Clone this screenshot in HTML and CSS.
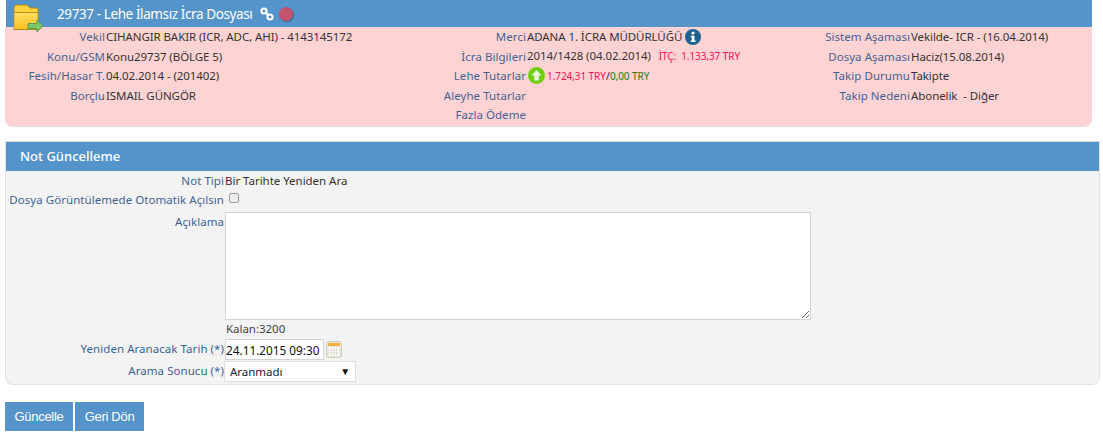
FILE: index.html
```html
<!DOCTYPE html>
<html lang="tr">
<head>
<meta charset="utf-8">
<title>Not Güncelleme</title>
<link rel="stylesheet" href="styles.css">
</head>
<body>
<section class="file">
  <header class="file-head">
    <svg class="folder" width="34" height="30" viewBox="0 0 34 30">
      <defs><linearGradient id="folderFill" x1="0" y1="0" x2="0" y2="1"><stop offset="0" stop-color="#ffdf60"/><stop offset="1" stop-color="#ffc21e"/></linearGradient></defs>
      <path d="M1 5 Q1 2 3 2 H13 Q15 2 16 4 L17 5 H24 Q25 5 25 7 V26.500 H1 Z" fill="#ffd23c" stroke="#a88a1e"/>
      <path d="M1.500 10 H24.500 V26 H1.500 Z" fill="url(#folderFill)"/>
      <path d="M1 9.500 H25" stroke="#b8941f"/>
      <path d="M15 20.500 H24 V17 L30 23 L24 29 V25.500 H15 Z" fill="#7fc66a" stroke="#5a9a4a"/>
    </svg>
    <h1 class="file-title">29737 - Lehe İlamsız İcra Dosyası</h1>
    <svg class="link-icon" width="14" height="14" viewBox="0 0 14 14" fill="none" stroke="#fff" stroke-width="2">
      <circle cx="4" cy="4" r="2.600"/><circle cx="10" cy="10" r="2.600"/><path d="M5.500 5.500 L8.500 8.500"/>
    </svg>
    <span class="status-dot"></span>
  </header>
  <div class="file-info">
    <span class="lab">Vekil</span><span class="val">CIHANGIR BAKIR (ICR, ADC, AHI) - 4143145172</span>
    <span class="lab">Merci</span><span class="val">ADANA 1. İCRA MÜDÜRLÜĞÜ
      <svg class="inline-icon" width="16" height="16" viewBox="0 0 16 16"><circle cx="8" cy="8" r="8" fill="#1f6291"/><circle cx="8" cy="4" r="1.600" fill="#fff"/><path d="M5.800 6.800 H9.500 V11.500 H10.500 V13 H5.800 V11.500 H6.800 V8.200 H5.800 Z" fill="#fff"/></svg></span>
    <span class="lab">Sistem Aşaması</span><span class="val">Vekilde- ICR - (16.04.2014)</span>

    <span class="lab">Konu/GSM</span><span class="val">Konu29737 (BÖLGE 5)</span>
    <span class="lab">İcra Bilgileri</span><span class="val">2014/1428 (04.02.2014) <small class="red itc">İTÇ:&nbsp; 1.133,37 TRY</small></span>
    <span class="lab">Dosya Aşaması</span><span class="val">Haciz(15.08.2014)</span>

    <span class="lab">Fesih/Hasar T.</span><span class="val">04.02.2014 - (201402)</span>
    <span class="lab">Lehe Tutarlar</span><span class="val"><svg class="inline-icon up" width="17" height="17" viewBox="0 0 17 17"><circle cx="8.500" cy="8.500" r="8.500" fill="#6fce0c"/><path d="M8.500 3 L13.500 8.500 H10.800 V13.500 H6.200 V8.500 H3.500 Z" fill="#e8f8e0"/></svg><small class="red">1.724,31 TRY</small><span class="slash">/</span><small class="green">0,00 TRY</small></span>
    <span class="lab">Takip Durumu</span><span class="val">Takipte</span>

    <span class="lab">Borçlu</span><span class="val">ISMAIL GÜNGÖR</span>
    <span class="lab">Aleyhe Tutarlar</span><span class="val"></span>
    <span class="lab">Takip Nedeni</span><span class="val">Abonelik&nbsp; - Diğer</span>

    <span class="lab"></span><span class="val"></span>
    <span class="lab">Fazla Ödeme</span><span class="val"></span>
    <span class="lab"></span><span class="val"></span>
  </div>
</section>

<section class="panel">
  <h2 class="panel-head">Not Güncelleme</h2>
  <form class="form">
    <label class="f-lab">Not Tipi</label>
    <div class="f-val">Bir Tarihte Yeniden Ara</div>

    <label class="f-lab check-lab">Dosya Görüntülemede Otomatik Açılsın</label>
    <div class="f-val check-val"><input class="check" type="checkbox"></div>

    <label class="f-lab">Açıklama</label>
    <div class="f-val"><textarea class="note"></textarea><div class="remain">Kalan:3200</div></div>

    <label class="f-lab">Yeniden Aranacak Tarih (*)</label>
    <div class="f-val date-row">
      <input class="date" type="text" value="24.11.2015 09:30">
      <svg class="cal" width="16" height="17" viewBox="0 0 16 17">
        <rect x=".5" y=".5" width="15" height="16" rx="2" fill="#e9e6da" stroke="#cfcbbd"/>
        <rect x="2" y="2" width="12" height="3" fill="#f0b23c"/>
        <rect x="3" y="6" width="10" height="9" fill="#fff"/>
        <path d="M5.500 6 V15 M8 6 V15 M10.500 6 V15 M3 9 H13 M3 12 H13" stroke="#d8d4c6" stroke-width=".8"/>
      </svg>
    </div>

    <label class="f-lab sel-lab">Arama Sonucu (*)</label>
    <div class="f-val"><div class="select"><span>Aranmadı</span><i class="caret">▼</i></div></div>
  </form>
</section>

<div class="actions">
  <button class="btn" type="button">Güncelle</button>
  <button class="btn" type="button">Geri Dön</button>
</div>
</body>
</html>
```
FILE: styles.css
```css
* { box-sizing: border-box; }
html, body { margin: 0; padding: 0; }
body {
  width: 1103px;
  height: 440px;
  overflow: hidden;
  background: #fff;
  font-family: "Noto Sans", "Open Sans", sans-serif;
  font-size: 11.5px;
  color: #333;
  padding-left: 5px;
}
.file { width: 1087px; }
.file-head {
  margin-left: 1px;
  height: 27px;
  background: #5594ca;
  display: flex;
  align-items: center;
  color: #fff;
  position: relative;
}
.folder { position: absolute; left: 7px; top: 3px; }
.file-title {
  margin: 0 0 0 51px;
  font-size: 13.500px;
  font-weight: 400;
  letter-spacing: -.4px;
}
.link-icon { margin-left: 8px; }
.status-dot {
  width: 14px;
  height: 14px;
  margin-left: 5px;
  border-radius: 50%;
  background: #c2546f;
  box-shadow: 1px 1px 1px rgba(0,0,0,.3);
}
.file-info {
  height: 99px;
  background: #ffd3d3;
  border-radius: 0 0 8px 8px;
  box-shadow: 0 1px 1px #ddd;
  display: grid;
  grid-template-columns: 101px 260px 161px 224px 160px 1fr;
  grid-auto-rows: 19.500px;
  align-items: center;
  line-height: 19px;
}
.lab { text-align: right; color: #3f6391; white-space: nowrap; padding-right: 1px; letter-spacing: .05px; }
.val { white-space: nowrap; letter-spacing: -.08px; }
.inline-icon { vertical-align: -4px; }
.up { margin-right: 2px; margin-left: 1px; }
small { font-size: 10px; }
.red { color: #f0145a; }
.green { color: #1a7a1a; }
.slash { color: #333; }
.itc { margin-left: 5px; }

.panel {
  width: 1095px;
  height: 244px;
  margin: 15px 0 0 0;
  background: #f3f3f3;
  border: 1px solid #e2e2e2;
  border-top-color: #ddd;
  border-radius: 0 0 8px 8px;
}
.panel-head {
  margin: 0;
  height: 29px;
  line-height: 28px;
  padding-left: 14px;
  background: #5594ca;
  color: #fff;
  font-size: 13px;
  font-weight: 500;
}
.form {
  display: grid;
  grid-template-columns: 219px 1fr;
  column-gap: 0;
}
.f-lab { text-align: right; color: #3f6391; line-height: 19px; padding-right: 1px; white-space: nowrap; letter-spacing: .05px; }
.f-val { line-height: 19px; letter-spacing: -.03px; }
.check-val { height: 22px; }
.check {
  appearance: none;
  display: block;
  width: 10px;
  height: 10px;
  margin: 3px 0 0 4px;
  background: #ececec;
  border: 1px solid #999;
  border-radius: 2px;
}
.note {
  display: block;
  width: 586px;
  height: 108px;
  margin: 0;
  background: #fff;
  border: 1px solid #d4d4d4;
}
.remain { height: 19px; line-height: 18px; padding-left: 1px; color: #444; }
.date-row { display: flex; align-items: center; height: 21px; gap: 2px; }
.date {
  width: 99px;
  height: 21px;
  padding: 0;
  border: 1px solid #d4d4d4;
  background: #fff;
  color: #111;
  font: inherit;
  font-size: 11.800px;
}
.sel-lab { padding-top: 1px; }
.select {
  margin-top: 1px;
  margin-left: -1px;
  width: 132px;
  height: 21px;
  display: flex;
  align-items: center;
  justify-content: space-between;
  padding: 0 5px 0 5px;
  background: #fff;
  border: 1px solid #ddd;
  color: #222;
}
.caret { font-style: normal; font-size: 10px; color: #111; }
.actions { display: flex; gap: 2px; margin-top: 17px; }
.btn {
  height: 29px;
  border: 0;
  background: #5594ca;
  color: #fff;
  font-family: "Liberation Sans", Arial, sans-serif;
  font-size: 13px;
  letter-spacing: -.3px;
  padding: 0;
  width: 68px;
}
.btn + .btn { width: 69px; }
```
